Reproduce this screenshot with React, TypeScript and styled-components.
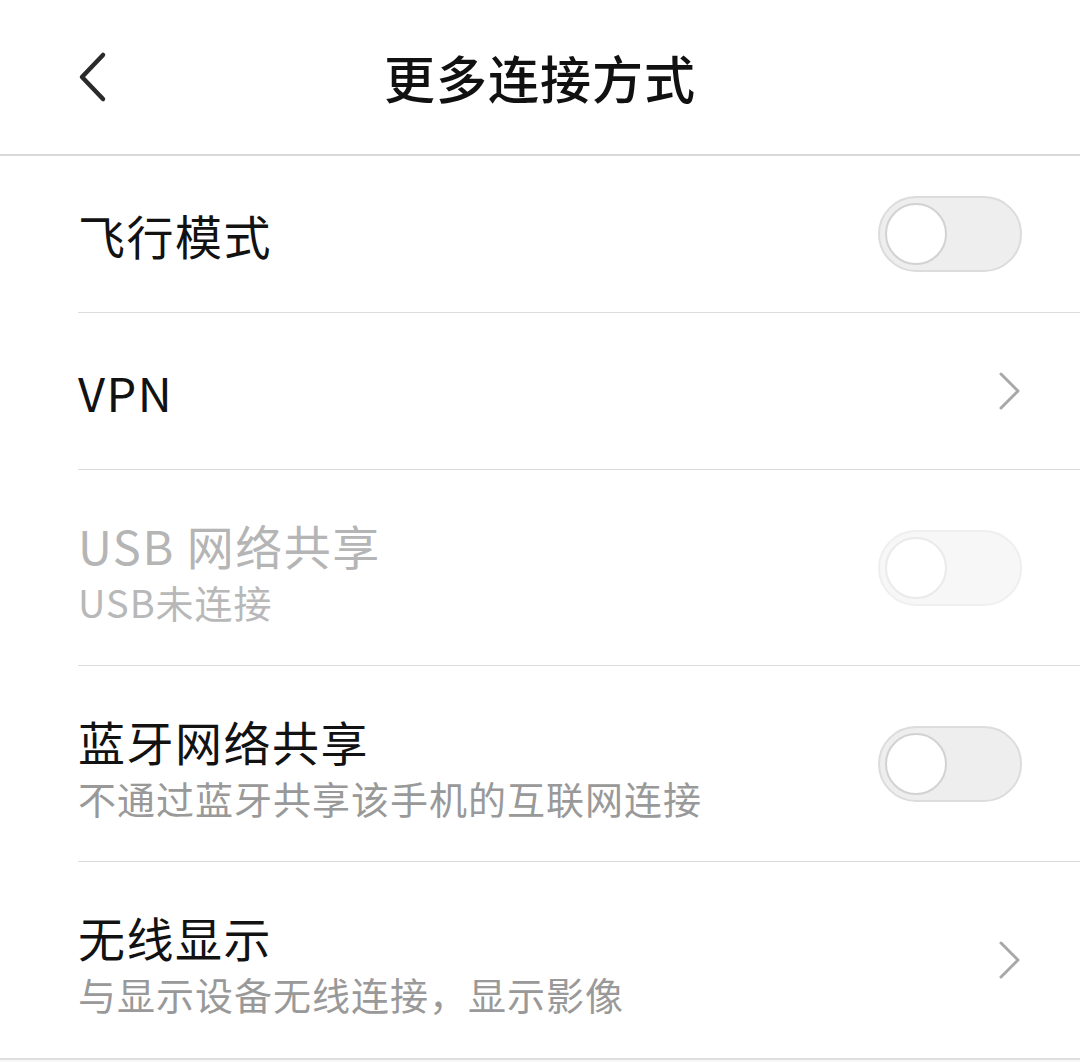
import React from 'react'
import styled, { createGlobalStyle } from 'styled-components'

const GlobalStyle = createGlobalStyle`
  html, body {
    margin: 0;
    padding: 0;
    background: #f7f7f7;
  }
  body {
    font-family: 'Noto Sans CJK SC', 'Noto Sans', sans-serif;
  }
`

const Page = styled.div`
  width: 1080px;
  background: #fff;
`

const Header = styled.header`
  position: relative;
  height: 154px;
  display: flex;
  align-items: center;
  justify-content: center;
  border-bottom: 2px solid #d9d9d9;
`

const BackButton = styled.button`
  position: absolute;
  left: 70px;
  top: 50%;
  transform: translateY(-50%);
  width: 44px;
  height: 64px;
  padding: 0;
  border: none;
  background: none;
  display: flex;
  align-items: center;
  justify-content: center;
`

const Title = styled.h1`
  margin: 0;
  font-size: 51px;
  font-weight: 500;
  color: #111;
  letter-spacing: 1px;
`

const List = styled.ul`
  margin: 0;
  padding: 0;
  list-style: none;
  border-bottom: 2px solid #dedede;
`

const Row = styled.li<{ tall?: boolean; last?: boolean }>`
  box-sizing: border-box;
  display: flex;
  align-items: center;
  justify-content: space-between;
  margin-left: 78px;
  padding-right: 58px;
  height: ${(p) => (p.tall ? '196px' : '157px')};
  border-bottom: ${(p) => (p.last ? 'none' : '1px solid #dcdcdc')};
`

const Texts = styled.div<{ tall?: boolean }>`
  display: flex;
  flex-direction: column;
  padding-top: ${(p) => (p.tall ? '8px' : '2px')};
`

const Label = styled.span<{ disabled?: boolean }>`
  font-size: 47px;
  line-height: 60px;
  color: ${(p) => (p.disabled ? '#b5b5b5' : '#121212')};
  letter-spacing: 1.5px;
`

const Sub = styled.span<{ disabled?: boolean }>`
  font-size: 38px;
  line-height: 54px;
  color: ${(p) => (p.disabled ? '#b8b8b8' : '#999')};
  letter-spacing: 1px;
`

const Track = styled.div<{ disabled?: boolean }>`
  box-sizing: border-box;
  width: 144px;
  height: 76px;
  border-radius: 38px;
  background: #eeeeee;
  border: 2px solid #dcdcdc;
  padding: 5px;
  display: flex;
  align-items: center;
  opacity: ${(p) => (p.disabled ? 0.45 : 1)};
`

const Knob = styled.div`
  box-sizing: border-box;
  width: 62px;
  height: 62px;
  border-radius: 50%;
  background: #fff;
  border: 2px solid #d2d2d2;
`

const Chevron = styled.svg`
  width: 24px;
  height: 40px;
`

const Switch = ({ disabled }: { disabled?: boolean }) => (
  <Track disabled={disabled}>
    <Knob />
  </Track>
)

const Arrow = () => (
  <Chevron viewBox="0 0 24 40" fill="none">
    <path d="M3 3 L20 20 L3 37" stroke="#a8a8a8" strokeWidth="3" strokeLinecap="round" strokeLinejoin="round" />
  </Chevron>
)

export default function App() {
  return (
    <Page>
      <GlobalStyle />
      <Header>
        <BackButton>
          <svg width="30" height="52" viewBox="0 0 30 52" fill="none">
            <path d="M26 4 L5 26 L26 48" stroke="#2a2a2a" strokeWidth="4.5" strokeLinecap="round" strokeLinejoin="round" />
          </svg>
        </BackButton>
        <Title>更多连接方式</Title>
      </Header>
      <List>
        <Row>
          <Texts>
            <Label>飞行模式</Label>
          </Texts>
          <Switch />
        </Row>
        <Row>
          <Texts>
            <Label>VPN</Label>
          </Texts>
          <Arrow />
        </Row>
        <Row tall>
          <Texts tall>
            <Label disabled>USB 网络共享</Label>
            <Sub disabled>USB未连接</Sub>
          </Texts>
          <Switch disabled />
        </Row>
        <Row tall>
          <Texts tall>
            <Label>蓝牙网络共享</Label>
            <Sub>不通过蓝牙共享该手机的互联网连接</Sub>
          </Texts>
          <Switch />
        </Row>
        <Row tall last>
          <Texts tall>
            <Label>无线显示</Label>
            <Sub>与显示设备无线连接，显示影像</Sub>
          </Texts>
          <Arrow />
        </Row>
      </List>
    </Page>
  )
}
